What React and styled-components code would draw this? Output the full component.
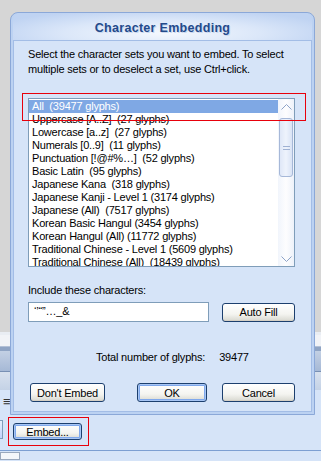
import React from "react";
import styled, { createGlobalStyle } from "styled-components";

const Global = createGlobalStyle`
  html, body { margin: 0; padding: 0; background: #d6e4f8; }
  body { font-family: "Liberation Sans", Arial, sans-serif; font-size: 11px; color: #000; letter-spacing: -0.2px; }
  * { box-sizing: border-box; }
`;

const Page = styled.div`
  position: relative;
  width: 321px;
  height: 461px;
  overflow: hidden;
  display: flex;
  flex-direction: column;
  background: #d6e4f8;
`;

const GrayArea = styled.div`
  height: 332px;
  background: #d6d6d6;
`;

const Band = styled.div`
  height: ${(p) => p.$h}px;
  background: ${(p) => p.$bg};
  border-bottom: ${(p) => (p.$line ? `1px solid ${p.$line}` : "none")};
`;

const GlyphRow = styled.div`
  height: 23px;
  display: flex;
  align-items: center;
  padding-left: 3px;
  font-size: 13px;
  color: #333;
`;

const EmbedRow = styled.div`
  height: 37px;
  display: flex;
  align-items: center;
  padding-left: 8px;
  position: relative;
`;

const ComboStub = styled.div`
  position: absolute;
  left: -12px;
  top: 7px;
  width: 15px;
  height: 19px;
  border: 1px solid #7f9db9;
  background: linear-gradient(#e6eefc, #c1d3fb);
  display: flex;
  align-items: center;
  justify-content: flex-end;
  padding-right: 2px;
`;

const RedBox = styled.div`
  border: 1px solid #e8000b;
  padding: ${(p) => p.$pad || "5px 6px 5px 4px"};
`;

const XPButton = styled.button`
  font-family: "Liberation Sans", Arial, sans-serif;
  font-size: 11px;
  letter-spacing: -0.2px;
  color: #000;
  width: ${(p) => p.$w}px;
  height: ${(p) => p.$h || 19}px;
  padding: 0;
  border-radius: 3px;
  border: 1px solid #1c3f6e;
  background: linear-gradient(#ffffff 0%, #f4f4f0 60%, #d8d8d0 100%);
  box-shadow: ${(p) =>
    p.$default
      ? "inset 0 0 0 1px #a8c6f4, inset 0 0 0 2px #7fa8ec"
      : "inset 0 -1px 0 #d6d0c5"};
  display: flex;
  align-items: center;
  justify-content: center;
`;

const BottomLine = styled.div`
  height: 1px;
  background: #7d9fd2;
`;

const BottomStrip = styled.div`
  flex: 1;
  display: flex;
`;

const SmallBox = styled.div`
  width: 20px;
  height: 8px;
  border: 1px solid #9aa8bd;
  background: #f4f6fa;
  margin-top: 1px;
`;

/* Dialog */
const Dialog = styled.div`
  position: absolute;
  left: 10px;
  top: 12px;
  width: 305px;
  height: 403px;
  border: 1px solid #8ba8d8;
  border-radius: 8px 8px 0 0;
  background: #bcd2f2;
  display: flex;
  flex-direction: column;
  padding: 0 2px 2px 2px;
`;

const TitleBar = styled.div`
  height: 27px;
  display: flex;
  align-items: center;
  justify-content: center;
  border-radius: 7px 7px 0 0;
  background: radial-gradient(ellipse 60% 90% at 50% 75%, #f4f8fe 0%, #dbe7f9 55%, #bfd3f2 100%);
  font-family: "Liberation Sans", Arial, sans-serif;
  font-weight: bold;
  font-size: 12.5px;
  color: #234a8b;
  text-shadow: 1px 1px 0 #c9d7ee;
  letter-spacing: 0.3px;
  padding-top: 2px;
`;

const Body = styled.div`
  flex: 1;
  background: #d6e4f8;
  border: 1px solid #a3bde6;
  display: flex;
  flex-direction: column;
  padding: 6px 0 0 14px;
  position: relative;
`;

const Intro = styled.p`
  margin: 0;
  line-height: 15px;
  width: 275px;
`;

const ListWrap = styled.div`
  position: relative;
  margin-top: 21px;
  width: 267px;
  height: 169px;
`;

const HighlightFrame = styled.div`
  position: absolute;
  left: -6px;
  top: -5px;
  width: 284px;
  height: 28px;
  border: 1px solid #e8000b;
  pointer-events: none;
`;

const ListBox = styled.div`
  width: 100%;
  height: 100%;
  border: 1px solid #7f9db9;
  background: #fff;
  display: flex;
  overflow: hidden;
`;

const Items = styled.ul`
  list-style: none;
  margin: 0;
  padding: 1px 0 0 0;
  flex: 1;
  overflow: hidden;
`;

const Item = styled.li`
  height: 13px;
  line-height: 13px;
  padding-left: 3px;
  white-space: pre;
  background: ${(p) => (p.$sel ? "#7fa8e4" : "transparent")};
  color: ${(p) => (p.$sel ? "#fff" : "#000")};
`;

const ScrollBar = styled.div`
  width: 16px;
  display: flex;
  flex-direction: column;
  background: linear-gradient(90deg, #f1f5fc, #fdfdfe 50%, #eef2fa);
`;

const ArrowBtn = styled.div`
  height: 15px;
  display: flex;
  align-items: center;
  justify-content: center;
`;

const Track = styled.div`
  flex: 1;
  padding-top: 4px;
`;

const Thumb = styled.div`
  height: 59px;
  margin: 0 1px;
  border: 1px solid #a6b8d8;
  border-radius: 3px;
  background: linear-gradient(90deg, #dfe7f7, #eef3fc 50%, #d9e3f5);
  display: flex;
  flex-direction: column;
  align-items: center;
  justify-content: center;
  gap: 2px;
`;

const Grip = styled.div`
  width: 7px;
  height: 1px;
  background: #9fb1d3;
`;

const Label = styled.div`
  margin-top: 17px;
  line-height: 13px;
`;

const InputRow = styled.div`
  display: flex;
  align-items: center;
  margin-top: 5px;
  gap: 13px;
`;

const TextInput = styled.div`
  width: 181px;
  height: 20px;
  border: 1px solid #7f9db9;
  background: #fff;
  padding: 1px 0 0 5px;
  font-size: 11px;
  line-height: 14px;
  white-space: pre;
`;

const TotalRow = styled.div`
  margin-top: 29px;
  display: flex;
  padding-left: 68px;
  gap: 14px;
  line-height: 13px;
`;

const ButtonRow = styled.div`
  display: flex;
  margin-top: 19px;
  padding-left: 2px;
`;

const Spacer = styled.div`
  width: ${(p) => p.$w}px;
`;

const UpArrow = () => (
  <svg width="11" height="6" viewBox="0 0 11 6">
    <polyline points="0.5,5.5 5.5,0.5 10.5,5.5" fill="none" stroke="#8da3c8" strokeWidth="1" />
  </svg>
);
const DownArrow = () => (
  <svg width="11" height="6" viewBox="0 0 11 6">
    <polyline points="0.5,0.5 5.5,5.5 10.5,0.5" fill="none" stroke="#8da3c8" strokeWidth="1" />
  </svg>
);

const items = [
  "All  (39477 glyphs)",
  "Uppercase [A..Z]  (27 glyphs)",
  "Lowercase [a..z]  (27 glyphs)",
  "Numerals [0..9]  (11 glyphs)",
  "Punctuation [!@#%…]  (52 glyphs)",
  "Basic Latin  (95 glyphs)",
  "Japanese Kana  (318 glyphs)",
  "Japanese Kanji - Level 1 (3174 glyphs)",
  "Japanese (All)  (7517 glyphs)",
  "Korean Basic Hangul (3454 glyphs)",
  "Korean Hangul (All) (11772 glyphs)",
  "Traditional Chinese - Level 1 (5609 glyphs)",
  "Traditional Chinese (All)  (18439 glyphs)",
];

export default function App() {
  return (
    <>
      <Global />
      <Page>
        <GrayArea />
        <Band $h={3} $bg="#e9edf3" />
        <Band $h={12} $bg="#f1f3f7" $line="#b2c0d6" />
        <Band $h={4} $bg="#8fa4c4" />
        <Band $h={21} $bg="linear-gradient(#c3d0e4, #a6b9d6)" $line="#7890b4" />
        <Band $h={18} $bg="linear-gradient(#d8e1ee, #c4d2e6)" />
        <GlyphRow>≡</GlyphRow>
        <EmbedRow>
          <ComboStub>
            <svg width="6" height="4" viewBox="0 0 6 4"><polygon points="0,0 6,0 3,4" fill="#4d6185" /></svg>
          </ComboStub>
          <RedBox>
            <XPButton $w={69} $h={17} $default>Embed...</XPButton>
          </RedBox>
        </EmbedRow>
        <BottomLine />
        <BottomStrip>
          <SmallBox />
        </BottomStrip>

        <Dialog>
          <TitleBar>Character Embedding</TitleBar>
          <Body>
            <Intro>
              Select the character sets you want to embed. To select multiple sets or to deselect a set, use Ctrl+click.
            </Intro>
            <ListWrap>
              <ListBox>
                <Items>
                  {items.map((t, i) => (
                    <Item key={t} $sel={i === 0}>{t}</Item>
                  ))}
                </Items>
                <ScrollBar>
                  <ArrowBtn><UpArrow /></ArrowBtn>
                  <Track>
                    <Thumb>
                      <Grip />
                      <Grip />
                    </Thumb>
                  </Track>
                  <ArrowBtn><DownArrow /></ArrowBtn>
                </ScrollBar>
              </ListBox>
              <HighlightFrame />
            </ListWrap>
            <Label>Include these characters:</Label>
            <InputRow>
              <TextInput>{"‘’“”…_&"}</TextInput>
              <XPButton $w={73}>Auto Fill</XPButton>
            </InputRow>
            <TotalRow>
              <span>Total number of glyphs:</span>
              <span>39477</span>
            </TotalRow>
            <ButtonRow>
              <XPButton $w={75}>Don't Embed</XPButton>
              <Spacer $w={32} />
              <XPButton $w={70} $default>OK</XPButton>
              <Spacer $w={15} />
              <XPButton $w={73}>Cancel</XPButton>
            </ButtonRow>
          </Body>
        </Dialog>
      </Page>
    </>
  );
}
